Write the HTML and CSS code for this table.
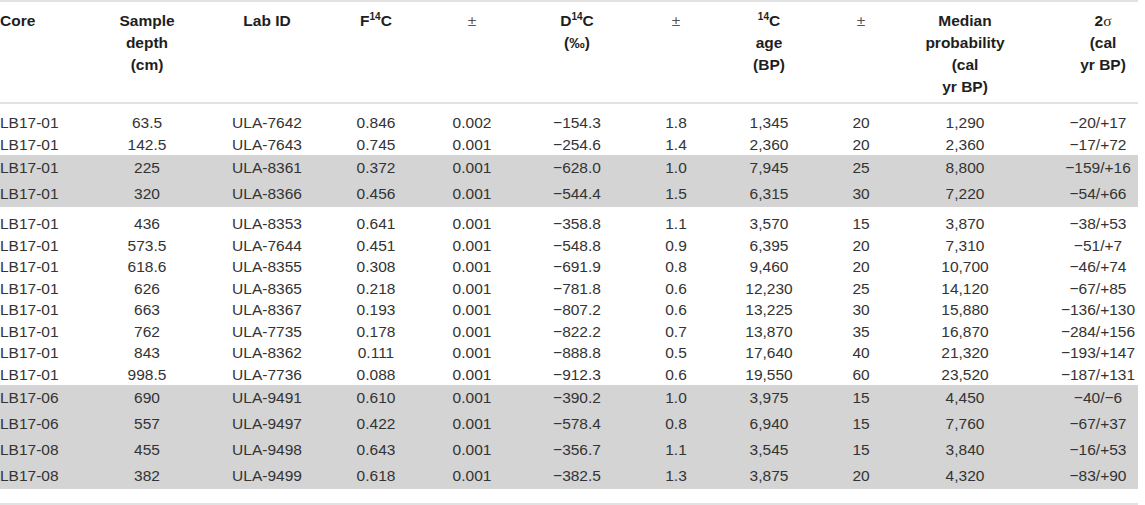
FILE: index.html
```html
<!DOCTYPE html>
<html lang="en">

<head>
  <meta charset="UTF-8" />
  <title>Radiocarbon results</title>
  <link rel="stylesheet" href="styles.css">
</head>

<body>

  <div class="table-wrap">
    <table class="radio-table">
      <colgroup>
        <col class="c-core">
        <col class="c-depth">
        <col class="c-lab">
        <col class="c-f">
        <col class="c-pm1">
        <col class="c-d">
        <col class="c-pm2">
        <col class="c-age">
        <col class="c-pm3">
        <col class="c-median">
        <col class="c-sigma">
      </colgroup>
      <thead>
        <tr>
          <th class="left">Core</th>
          <th>Sample<br>depth<br>(cm)</th>
          <th>Lab ID</th>
          <th>F<sup>14</sup>C</th>
          <th class="pm">±</th>
          <th>D<sup>14</sup>C<br>(‰)</th>
          <th class="pm">±</th>
          <th><sup>14</sup>C<br>age<br>(BP)</th>
          <th class="pm">±</th>
          <th>Median<br>probability<br>(cal<br>yr BP)</th>
          <th class="sigma">2<span class="greek">σ</span><br>(cal<br>yr BP)</th>
        </tr>
      </thead>

      <tbody class="plain first">
        <tr><td class="left">LB17-01</td><td>63.5</td><td>ULA-7642</td><td>0.846</td><td>0.002</td><td>−154.3</td><td>1.8</td><td>1,345</td><td>20</td><td>1,290</td><td class="range">−20/+17</td></tr>
        <tr><td class="left">LB17-01</td><td>142.5</td><td>ULA-7643</td><td>0.745</td><td>0.001</td><td>−254.6</td><td>1.4</td><td>2,360</td><td>20</td><td>2,360</td><td class="range">−17/+72</td></tr>
      </tbody>

      <tbody class="shaded">
        <tr><td class="left">LB17-01</td><td>225</td><td>ULA-8361</td><td>0.372</td><td>0.001</td><td>−628.0</td><td>1.0</td><td>7,945</td><td>25</td><td>8,800</td><td class="range">−159/+16</td></tr>
        <tr><td class="left">LB17-01</td><td>320</td><td>ULA-8366</td><td>0.456</td><td>0.001</td><td>−544.4</td><td>1.5</td><td>6,315</td><td>30</td><td>7,220</td><td class="range">−54/+66</td></tr>
      </tbody>

      <tbody class="plain after-shade">
        <tr><td class="left">LB17-01</td><td>436</td><td>ULA-8353</td><td>0.641</td><td>0.001</td><td>−358.8</td><td>1.1</td><td>3,570</td><td>15</td><td>3,870</td><td class="range">−38/+53</td></tr>
        <tr><td class="left">LB17-01</td><td>573.5</td><td>ULA-7644</td><td>0.451</td><td>0.001</td><td>−548.8</td><td>0.9</td><td>6,395</td><td>20</td><td>7,310</td><td class="range">−51/+7</td></tr>
        <tr><td class="left">LB17-01</td><td>618.6</td><td>ULA-8355</td><td>0.308</td><td>0.001</td><td>−691.9</td><td>0.8</td><td>9,460</td><td>20</td><td>10,700</td><td class="range">−46/+74</td></tr>
        <tr><td class="left">LB17-01</td><td>626</td><td>ULA-8365</td><td>0.218</td><td>0.001</td><td>−781.8</td><td>0.6</td><td>12,230</td><td>25</td><td>14,120</td><td class="range">−67/+85</td></tr>
        <tr><td class="left">LB17-01</td><td>663</td><td>ULA-8367</td><td>0.193</td><td>0.001</td><td>−807.2</td><td>0.6</td><td>13,225</td><td>30</td><td>15,880</td><td class="range">−136/+130</td></tr>
        <tr><td class="left">LB17-01</td><td>762</td><td>ULA-7735</td><td>0.178</td><td>0.001</td><td>−822.2</td><td>0.7</td><td>13,870</td><td>35</td><td>16,870</td><td class="range">−284/+156</td></tr>
        <tr><td class="left">LB17-01</td><td>843</td><td>ULA-8362</td><td>0.111</td><td>0.001</td><td>−888.8</td><td>0.5</td><td>17,640</td><td>40</td><td>21,320</td><td class="range">−193/+147</td></tr>
        <tr><td class="left">LB17-01</td><td>998.5</td><td>ULA-7736</td><td>0.088</td><td>0.001</td><td>−912.3</td><td>0.6</td><td>19,550</td><td>60</td><td>23,520</td><td class="range">−187/+131</td></tr>
      </tbody>

      <tbody class="shaded">
        <tr><td class="left">LB17-06</td><td>690</td><td>ULA-9491</td><td>0.610</td><td>0.001</td><td>−390.2</td><td>1.0</td><td>3,975</td><td>15</td><td>4,450</td><td class="range">−40/−6</td></tr>
        <tr><td class="left">LB17-06</td><td>557</td><td>ULA-9497</td><td>0.422</td><td>0.001</td><td>−578.4</td><td>0.8</td><td>6,940</td><td>15</td><td>7,760</td><td class="range">−67/+37</td></tr>
        <tr><td class="left">LB17-08</td><td>455</td><td>ULA-9498</td><td>0.643</td><td>0.001</td><td>−356.7</td><td>1.1</td><td>3,545</td><td>15</td><td>3,840</td><td class="range">−16/+53</td></tr>
        <tr><td class="left">LB17-08</td><td>382</td><td>ULA-9499</td><td>0.618</td><td>0.001</td><td>−382.5</td><td>1.3</td><td>3,875</td><td>20</td><td>4,320</td><td class="range">−83/+90</td></tr>
      </tbody>
    </table>
  </div>

</body>

</html>
```

FILE: styles.css
```css
body {
  margin: 0;
  background: #fff;
  font-family: "Liberation Sans", Arial, sans-serif;
  color: #333;
}

.table-wrap {
  width: 1138px;
  border-top: 2px solid #e2e2e2;
  border-bottom: 2px solid #e2e2e2;
  padding-bottom: 14px;
}

.radio-table {
  width: 1138px;
  table-layout: fixed;
  border-collapse: collapse;
  font-size: 15.5px;
}

/* column widths */
.c-core { width: 90px; }
.c-depth { width: 114px; }
.c-lab { width: 126px; }
.c-f { width: 92px; }
.c-pm1 { width: 100px; }
.c-d { width: 110px; }
.c-pm2 { width: 88px; }
.c-age { width: 98px; }
.c-pm3 { width: 86px; }
.c-median { width: 122px; }
.c-sigma { width: 112px; }

th,
td {
  padding: 0;
  text-align: center;
  white-space: nowrap;
}

th {
  vertical-align: top;
  font-weight: 700;
  color: #1e1e1e;
  line-height: 22px;
  padding-top: 8px;
  padding-bottom: 4px;
  border-bottom: 2px solid #e2e2e2;
}

th.pm {
  font-weight: 400;
  color: #555;
}

th.sigma {
  padding-left: 42px;
}

.greek {
  font-family: "Liberation Serif", "Times New Roman", serif;
  font-weight: 400;
}

sup {
  font-size: 10px;
  line-height: 0;
  vertical-align: 6px;
}

.left {
  text-align: left;
}

td.range {
  padding-left: 32px;
}

.plain td {
  line-height: 21.5px;
}

.first tr:first-child td {
  padding-top: 8px;
}

.after-shade tr:first-child td {
  padding-top: 6px;
}

.shaded td {
  background: #d4d4d4;
  line-height: 26px;
}
```
